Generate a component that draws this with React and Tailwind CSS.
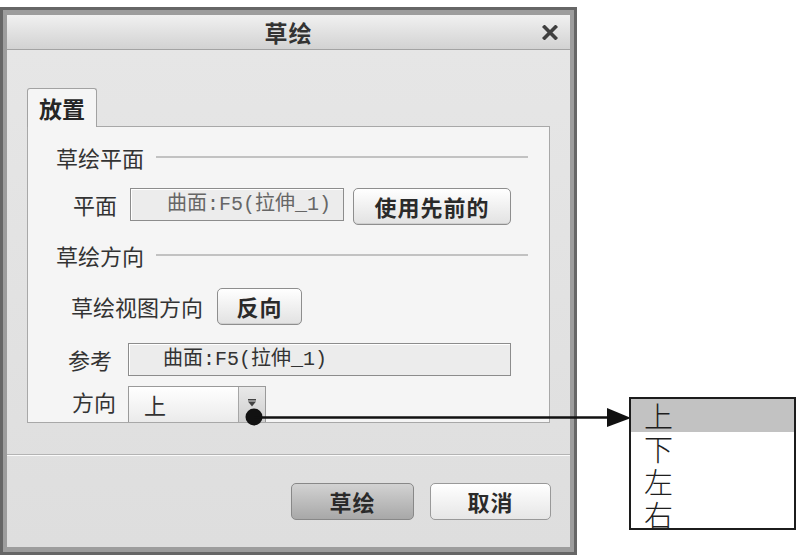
import React from "react";

const FIELD_TEXT = "曲面:F5(拉伸_1)";

function SectionHeading({ title, className = "" }) {
  return (
    <div className={`flex items-center h-[22px] pr-[21px] ${className}`}>
      <span className="text-[22px] leading-[22px] text-[#333]">{title}</span>
      <div className="flex-1 ml-[12px] h-[2px] bg-[#c2c2c2]" />
    </div>
  );
}

function PushButton({ children, className = "" }) {
  return (
    <button
      type="button"
      className={`flex items-center justify-center rounded-[5px] border border-[#8e8e8e] bg-gradient-to-b from-[#ffffff] to-[#e2e2e2] shadow-[inset_0_-1px_0_#cfcfcf] text-[22px] font-bold text-[#2a2a2a] tracking-[1px] ${className}`}
    >
      {children}
    </button>
  );
}

function ReadonlyField({ className = "", textClass = "" }) {
  return (
    <div
      className={`flex items-center border border-[#8c8c8c] bg-[#ececec] shadow-[inset_1px_1px_0_#ffffff] ${className}`}
    >
      <span
        className={`text-[20px] leading-[20px] font-['Liberation_Mono','Noto_Sans_CJK_SC',monospace] ${textClass}`}
      >
        {FIELD_TEXT}
      </span>
    </div>
  );
}

function CloseIcon() {
  return (
    <svg width="16" height="15" viewBox="0 0 16 15">
      <path d="M2.5 2 L13.5 13 M13.5 2 L2.5 13" stroke="#3f3f3f" strokeWidth="3.6" strokeLinecap="square" />
    </svg>
  );
}

function DropArrow() {
  return (
    <svg width="10" height="8" viewBox="0 0 10 8">
      <rect x="1" y="0" width="8" height="1.5" fill="#444" />
      <path d="M1 2.5 L9 2.5 L5 7.5 Z" fill="#444" />
    </svg>
  );
}

export default function App() {
  const options = ["上", "下", "左", "右"];

  return (
    <div className="relative w-[797px] h-[555px] overflow-hidden bg-white font-['Noto_Sans_CJK_SC',sans-serif]">
      {/* dialog */}
      <div className="mt-[7px] w-[577px] h-[548px] border-[3px] border-[#666666] bg-[#9d9d9d] px-[4px] pt-[5px] pb-[5px] flex flex-col">
        {/* title bar */}
        <div className="relative h-[35px] shrink-0 flex items-center justify-center border-b border-[#a3a3a3] bg-gradient-to-b from-[#f1f1f1] to-[#d2d2d2]">
          <span className="text-[23px] font-bold text-[#333] tracking-[1px]">草绘</span>
          <div className="absolute right-[12px] top-[10px]">
            <CloseIcon />
          </div>
        </div>

        {/* body */}
        <div className="flex-1 flex flex-col bg-gradient-to-b from-[#e6e6e6] to-[#dedede]">
          <div className="h-[404px] shrink-0 pt-[38px] px-[20px]">
            {/* tab */}
            <div className="relative z-10 -mb-px w-[70px] h-[39px] rounded-t-[3px] border border-b-0 border-[#a2a2a2] bg-[#f5f5f5] flex items-center justify-center">
              <span className="text-[23px] font-bold text-[#262626]">放置</span>
            </div>
            {/* tab panel */}
            <div className="h-[297px] w-[523px] border border-[#a8a8a8] bg-[#f5f5f5] overflow-hidden pl-[28px] pt-[19px] flex flex-col">
              <SectionHeading title="草绘平面" />

              <div className="mt-[20px] h-[37px] flex items-start">
                <span className="ml-[17px] w-[44px] h-[33px] flex items-center text-[22px] text-[#333]">平面</span>
                <ReadonlyField className="ml-[13px] w-[214px] h-[33px] pl-[36px]" textClass="text-[#666]" />
                <PushButton className="ml-[9px] w-[158px] h-[37px]">使用先前的</PushButton>
              </div>

              <SectionHeading title="草绘方向" className="mt-[19px]" />

              <div className="mt-[22px] h-[37px] flex items-center">
                <span className="ml-[15px] text-[22px] text-[#333]">草绘视图方向</span>
                <PushButton className="ml-[14px] w-[85px] h-[37px]">反向</PushButton>
              </div>

              <div className="mt-[18px] h-[33px] flex items-center">
                <span className="ml-[12px] w-[44px] text-[22px] text-[#333]">参考</span>
                <ReadonlyField className="ml-[16px] w-[383px] h-[33px] pl-[34px]" textClass="text-[#333]" />
              </div>

              <div className="mt-[10px] h-[40px] shrink-0 flex items-start">
                <span className="ml-[16px] w-[44px] h-[30px] flex items-center text-[22px] text-[#333]">方向</span>
                <div className="ml-[12px] w-[138px] h-[40px] flex border border-[#9a9a9a]">
                  <div className="flex-1 bg-gradient-to-b from-[#ffffff] to-[#e9e9e9] pl-[15px] pt-[6px] text-[22px] leading-[22px] text-[#333]">
                    上
                  </div>
                  <div className="w-[27px] border-l border-[#a6a6a6] bg-gradient-to-b from-[#e9e9e9] to-[#cdcdcd] flex justify-center pt-[12px]">
                    <DropArrow />
                  </div>
                </div>
              </div>
            </div>
          </div>

          {/* separator */}
          <div className="h-px bg-[#b3b3b3]" />
          <div className="h-px bg-[#fafafa]" />

          {/* footer */}
          <div className="flex-1 flex justify-end items-start pt-[27px] pr-[19px] gap-[16px]">
            <button
              type="button"
              className="w-[123px] h-[37px] rounded-[5px] border border-[#888] bg-gradient-to-b from-[#d2d2d2] to-[#a8a8a8] text-[22px] font-bold text-[#2a2a2a] tracking-[1px]"
            >
              草绘
            </button>
            <button
              type="button"
              className="w-[121px] h-[37px] rounded-[5px] border border-[#999] bg-gradient-to-b from-[#ffffff] to-[#e6e6e6] text-[22px] font-bold text-[#2a2a2a] tracking-[1px]"
            >
              取消
            </button>
          </div>
        </div>
      </div>

      {/* callout arrow */}
      <svg className="absolute left-0 top-0 pointer-events-none" width="797" height="555">
        <circle cx="254" cy="417" r="8.5" fill="#111" />
        <line x1="254" y1="417.5" x2="610" y2="417.5" stroke="#111" strokeWidth="2.5" />
        <path d="M607 408 L631 418 L607 427 Z" fill="#111" />
      </svg>

      {/* opened option list */}
      <div className="absolute left-[629px] top-[397px] w-[167px] h-[133px] border-2 border-[#1c1c1c] bg-white overflow-hidden">
        {options.map((opt, i) => (
          <div
            key={opt}
            className={`h-[33px] pl-[13px] flex items-center text-[29px] leading-[29px] font-light text-[#1e1e1e] ${i === 0 ? "bg-[#c2c2c2]" : ""}`}
          >
            {opt}
          </div>
        ))}
      </div>
    </div>
  );
}
